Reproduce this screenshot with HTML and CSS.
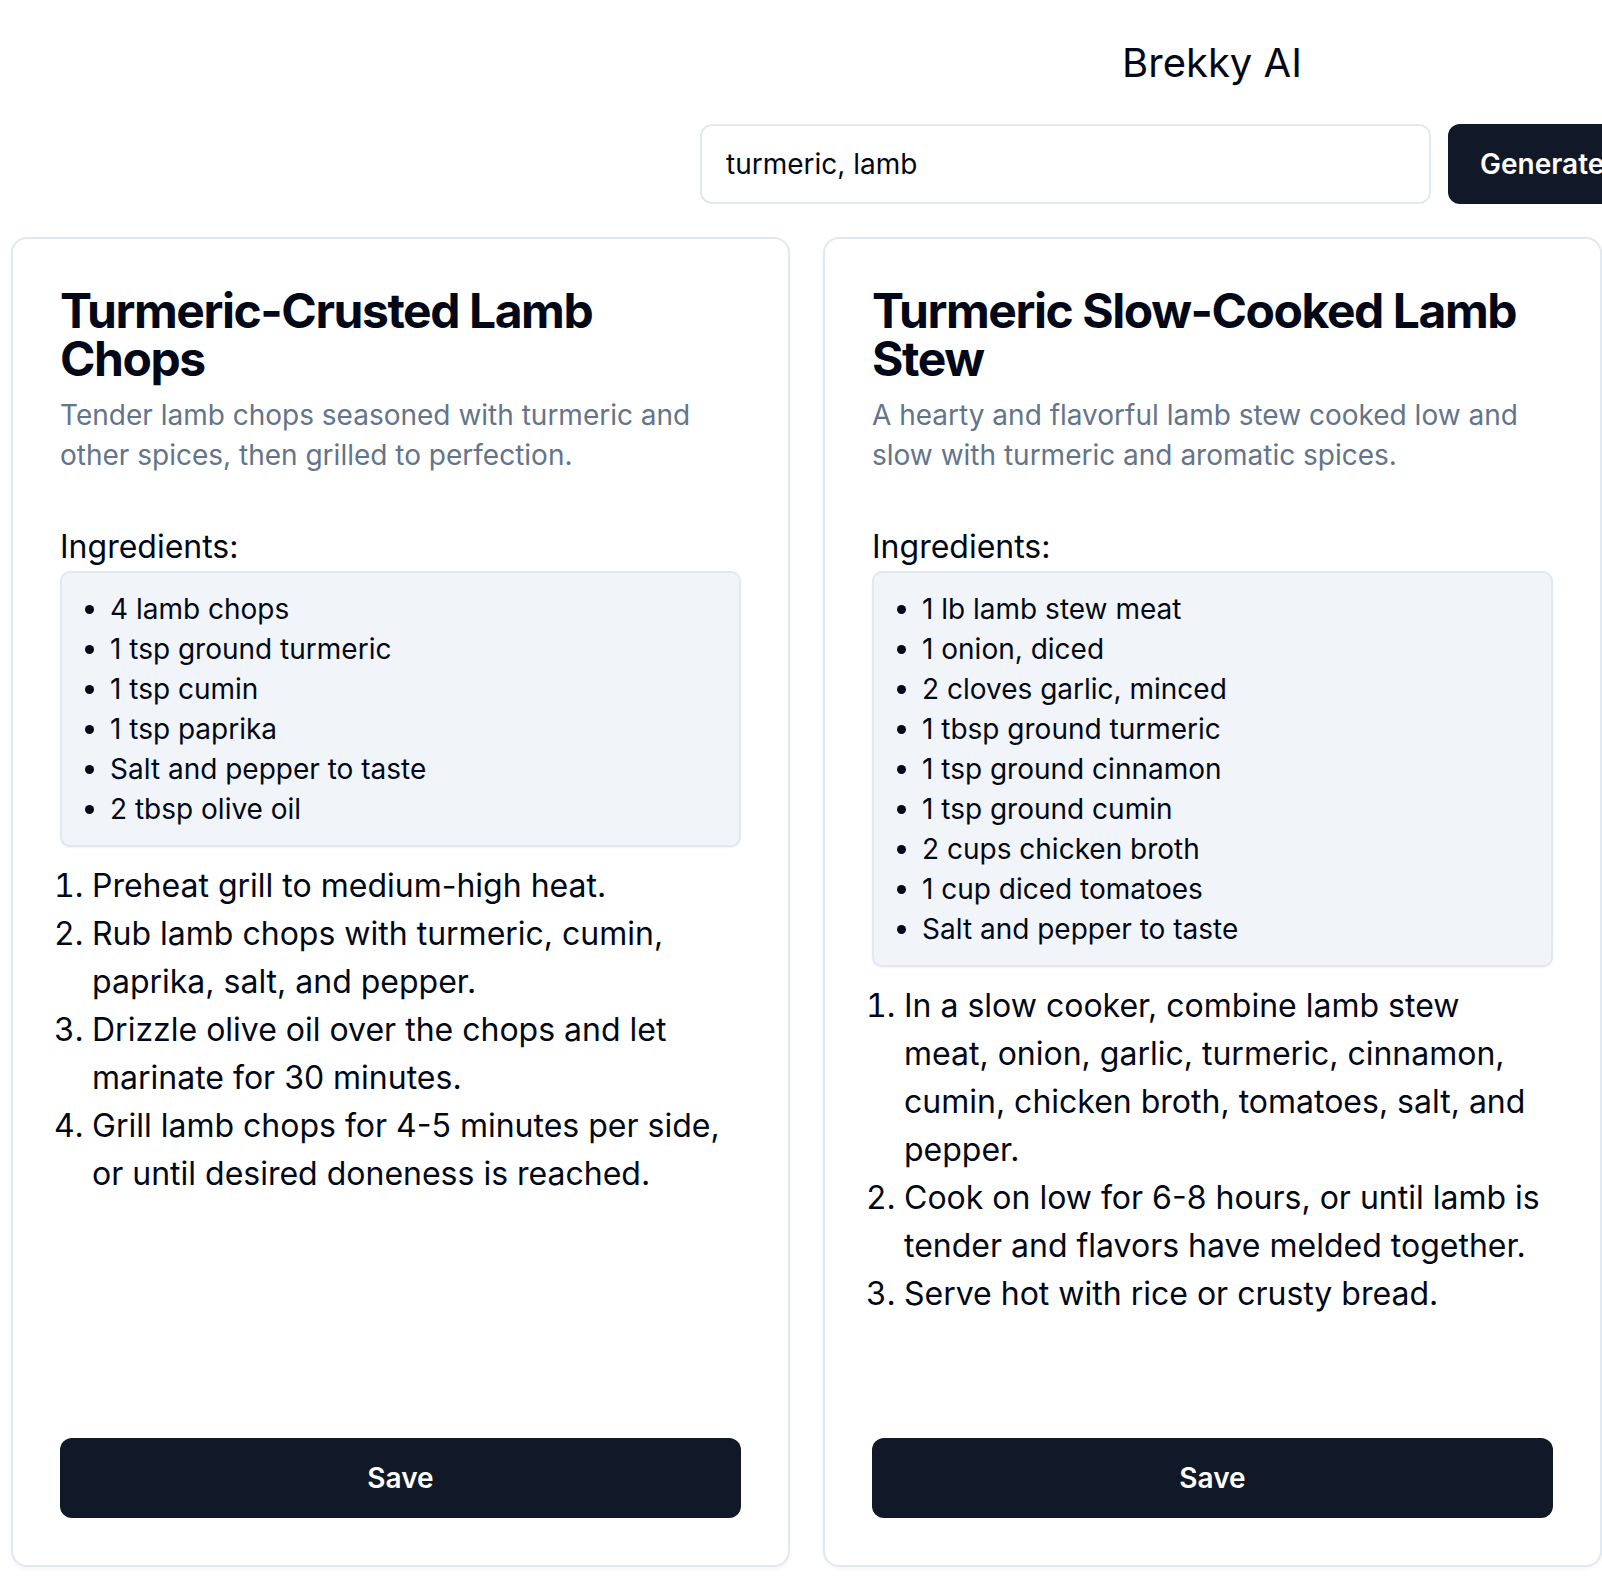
FILE: index.html
```html
<!DOCTYPE html>
<html lang="en">
  <head>
    <meta charset="UTF-8" />
    <meta name="viewport" content="width=device-width, initial-scale=1.0" />
    <title>Brekky AI</title>
    <link rel="stylesheet" href="styles.css">
  </head>
  <body>
    <div class="page">
      <h1 class="brand">Brekky AI</h1>

      <form class="search">
        <input class="search-input" type="text" name="ingredients" value="turmeric, lamb" />
        <button class="btn btn-generate" type="button">Generate</button>
      </form>

      <div class="recipes">
        <div class="card">
          <div class="card-header">
            <h2 class="card-title">Turmeric-Crusted Lamb Chops</h2>
            <p class="card-desc">Tender lamb chops seasoned with turmeric and other spices, then grilled to perfection.</p>
          </div>
          <div class="card-content">
            <h3 class="label">Ingredients:</h3>
            <ul class="ingredients">
              <li>4 lamb chops</li>
              <li>1 tsp ground turmeric</li>
              <li>1 tsp cumin</li>
              <li>1 tsp paprika</li>
              <li>Salt and pepper to taste</li>
              <li>2 tbsp olive oil</li>
            </ul>
            <ol class="steps">
              <li>Preheat grill to medium-high heat.</li>
              <li>Rub lamb chops with turmeric, cumin, paprika, salt, and pepper.</li>
              <li>Drizzle olive oil over the chops and let marinate for 30 minutes.</li>
              <li>Grill lamb chops for 4-5 minutes per side, or until desired doneness is reached.</li>
            </ol>
          </div>
          <div class="card-footer">
            <button class="btn btn-save" type="button">Save</button>
          </div>
        </div>

        <div class="card">
          <div class="card-header">
            <h2 class="card-title">Turmeric Slow-Cooked Lamb Stew</h2>
            <p class="card-desc">A hearty and flavorful lamb stew cooked low and slow with turmeric and aromatic spices.</p>
          </div>
          <div class="card-content">
            <h3 class="label">Ingredients:</h3>
            <ul class="ingredients">
              <li>1 lb lamb stew meat</li>
              <li>1 onion, diced</li>
              <li>2 cloves garlic, minced</li>
              <li>1 tbsp ground turmeric</li>
              <li>1 tsp ground cinnamon</li>
              <li>1 tsp ground cumin</li>
              <li>2 cups chicken broth</li>
              <li>1 cup diced tomatoes</li>
              <li>Salt and pepper to taste</li>
            </ul>
            <ol class="steps">
              <li>In a slow cooker, combine lamb stew meat, onion, garlic, turmeric, cinnamon, cumin, chicken broth, tomatoes, salt, and pepper.</li>
              <li>Cook on low for 6-8 hours, or until lamb is tender and flavors have melded together.</li>
              <li>Serve hot with rice or crusty bread.</li>
            </ol>
          </div>
          <div class="card-footer">
            <button class="btn btn-save" type="button">Save</button>
          </div>
        </div>
      </div>
    </div>
  </body>
</html>
```

FILE: styles.css
```css
html,
body {
  overflow-x: hidden;
}

body {
  margin: 0;
  padding: 0;
  background: #ffffff;
  color: #020817;
  font-family: Inter, "Noto Sans", sans-serif;
}

.page {
  width: 2424px;
  box-sizing: border-box;
  padding: 35px 11px 30px;
  display: flex;
  flex-direction: column;
  align-items: center;
}

.brand {
  margin: 0 0 33px;
  font-size: 40px;
  line-height: 56px;
  font-weight: 400;
}

.search {
  width: 1024px;
  display: flex;
  gap: 17px;
  margin: 0;
}

.search-input {
  flex: 1;
  height: 80px;
  box-sizing: border-box;
  padding: 0 24px;
  border: 2px solid #e2e8f0;
  border-radius: 12px;
  font-family: inherit;
  font-size: 28px;
  color: #020817;
  background: #ffffff;
}

.btn {
  height: 80px;
  border: none;
  border-radius: 12px;
  background: #111827;
  color: #ffffff;
  font-family: inherit;
  font-size: 28px;
  font-weight: 600;
  cursor: pointer;
}

.btn-generate {
  width: 276px;
  padding: 0 32px;
  text-align: left;
}

.recipes {
  align-self: flex-start;
  margin-top: 33px;
  display: grid;
  grid-template-columns: repeat(3, 779px);
  gap: 33px;
}

.card {
  min-height: 1330px;
  box-sizing: border-box;
  display: flex;
  flex-direction: column;
  border: 2px solid #e2e8f0;
  border-radius: 16px;
  background: #ffffff;
  box-shadow: 0 2px 4px rgba(0, 0, 0, 0.04);
}

.card-header {
  padding: 48px 47px 48px;
  display: flex;
  flex-direction: column;
  gap: 12px;
}

.card-title {
  margin: 0;
  font-size: 48px;
  line-height: 48px;
  font-weight: 700;
  letter-spacing: -0.03em;
  color: #020817;
}

.card-desc {
  margin: 0;
  font-size: 28px;
  line-height: 40px;
  color: #64748b;
}

.card-content {
  padding: 0 47px;
}

.label {
  margin: 0;
  font-size: 32px;
  line-height: 48px;
  font-weight: 400;
}

.ingredients {
  margin: 0;
  padding: 16px 16px 16px 48px;
  list-style: disc;
  background: #f1f5f9;
  border: 2px solid #e2e8f0;
  border-radius: 10px;
  box-shadow: 0 1px 2px rgba(0, 0, 0, 0.06);
  font-size: 28px;
  line-height: 40px;
}

.steps {
  margin: 15px 0 0;
  padding-left: 32px;
  font-size: 32px;
  line-height: 48px;
}

.card-footer {
  margin-top: auto;
  padding: 0 47px 47px;
}

.btn-save {
  width: 100%;
  display: block;
}
```
